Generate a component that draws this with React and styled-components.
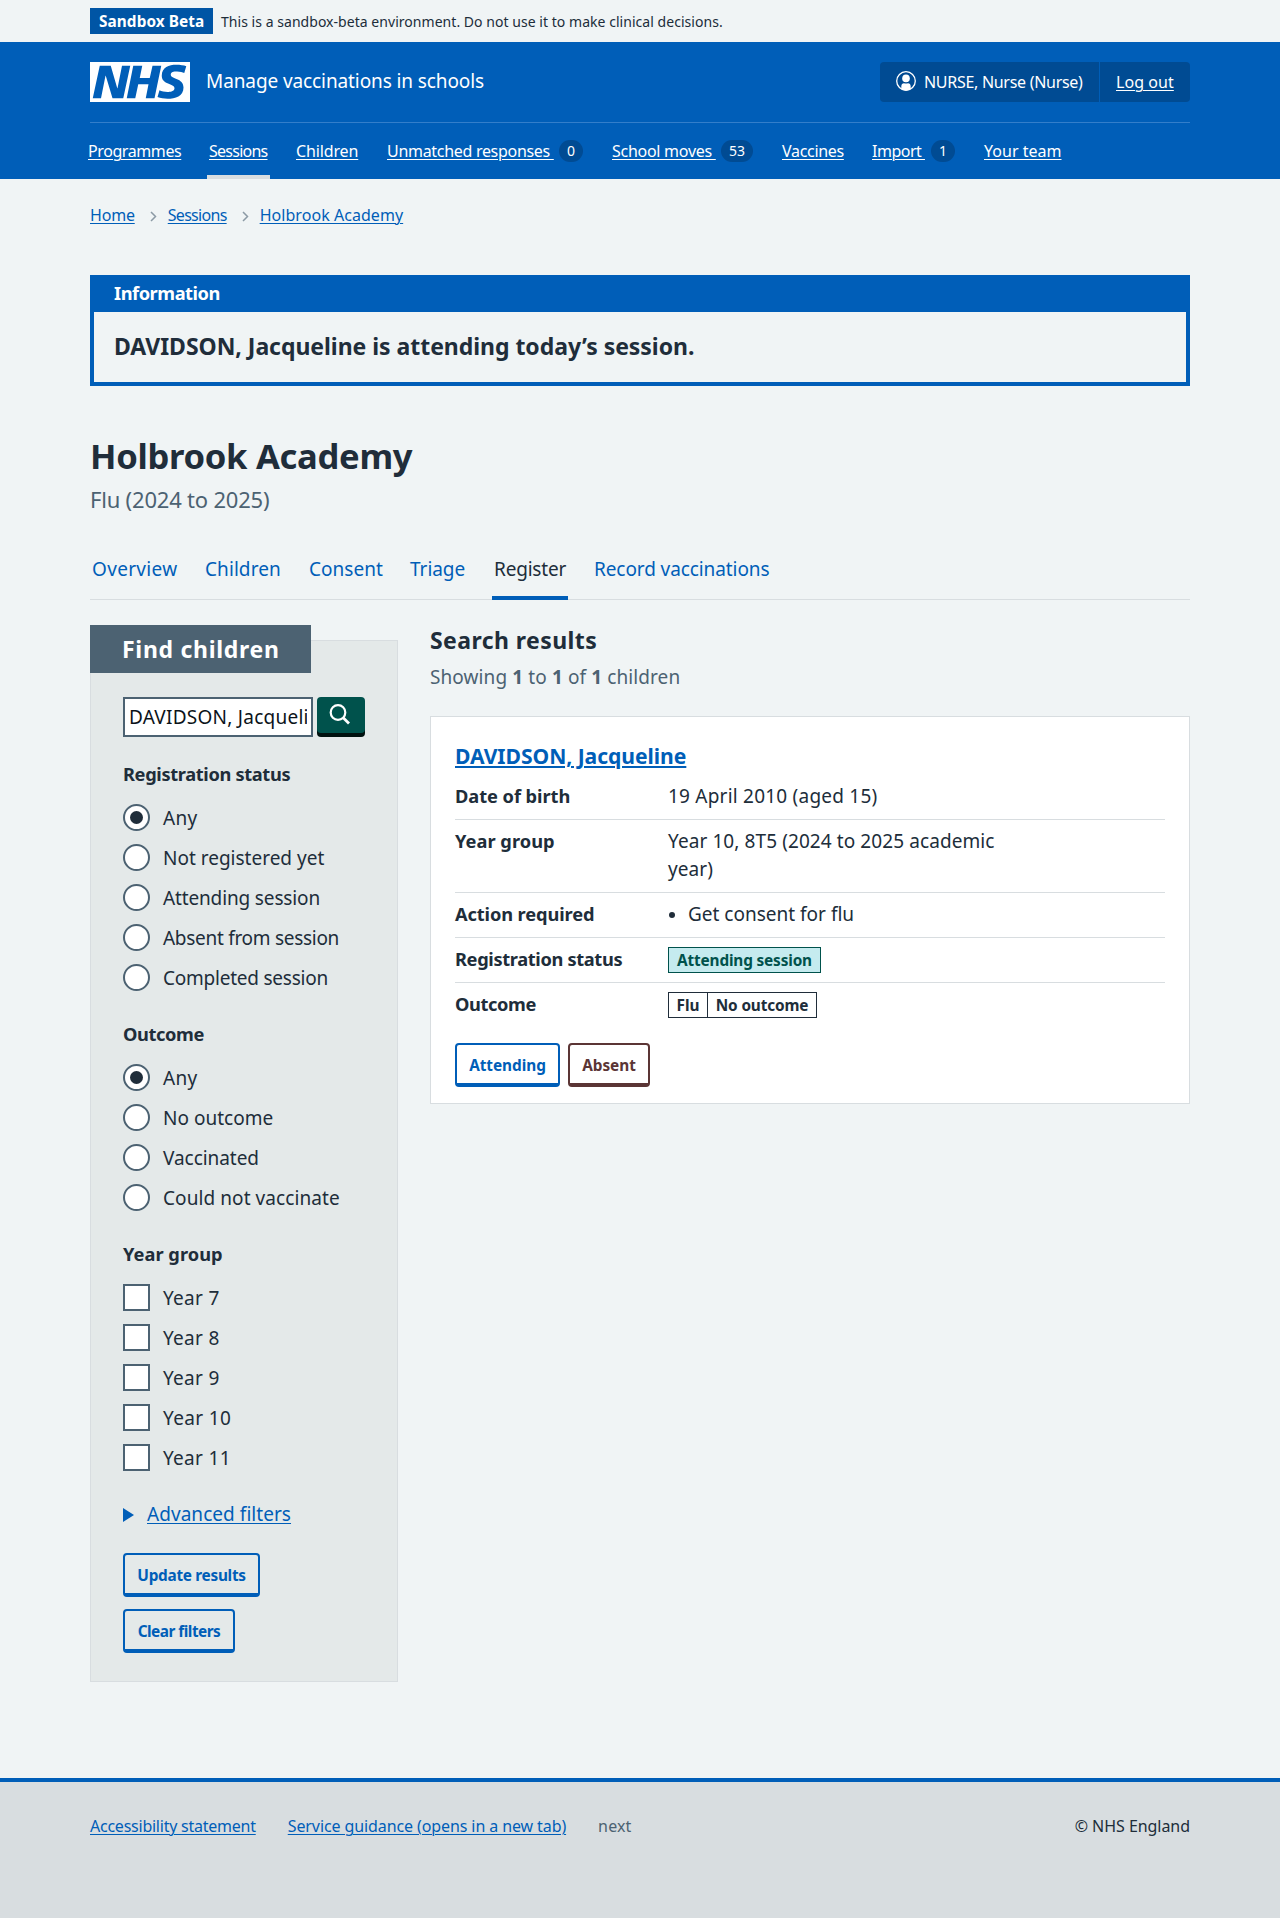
import React from "react";
import styled, { createGlobalStyle } from "styled-components";

const Global = createGlobalStyle`
  *, *::before, *::after { box-sizing: border-box; }
  body {
    margin: 0;
    background: #f0f4f5;
    color: #202d3a;
    font-family: "Noto Sans", "Open Sans", sans-serif;
    font-size: 19px;
    line-height: 28px;
  }
  a {
    color: #005eb8;
    text-decoration: underline;
    text-decoration-thickness: 1px;
    text-underline-offset: 2px;
  }
  h1, h2, h3, p, ul, dl, dd, fieldset, legend { margin: 0; padding: 0; border: 0; }
`;

const spacing = ({ $ls = 0 }) => `letter-spacing: ${$ls}px; white-space: nowrap;`;
const Text = styled.span`${spacing}`;
const Container = styled.div`
  width: 1100px;
  margin: 0 auto;
`;

/* Environment banner */
const Environment = styled(Container)`
  display: flex;
  align-items: center;
  gap: 8px;
  height: 42px;
`;
const EnvironmentTag = styled.strong`
  width: 123px;
  padding: 2px 0 0 9px;
  background: #0055a5;
  color: #fff;
  font-size: 15.36px;
  line-height: 24px;
  ${spacing}
`;
const EnvironmentText = styled.span`
  padding-top: 1px;
  font-size: 14px;
  ${spacing}
`;

/* Header */
const Header = styled.header`
  height: 137px;
  background: #005eb8;
  color: #fff;
  a { color: #fff; }
`;
const HeaderTop = styled.div`
  display: flex;
  align-items: center;
  height: 81px;
  border-bottom: 1px solid #337eca;
`;
const ServiceName = styled.span`
  flex: 1;
  margin-left: 16px;
  padding-bottom: 2px;
  line-height: 36px;
  ${spacing}
`;
const Account = styled.div`
  display: flex;
  gap: 1px;
  width: 310px;
  height: 40px;
  border-radius: 4px;
  overflow: hidden;
  font-size: 16px;
  line-height: 40px;
`;
const AccountItem = styled.div`
  display: flex;
  align-items: center;
  gap: 8px;
  width: ${({ $w }) => $w}px;
  padding-left: 16px;
  background: #004b93;
  svg { margin-bottom: 2px; }
`;
const Nav = styled.nav`
  display: flex;
  gap: 24px;
  margin-left: -4px;
  font-size: 16px;
  line-height: 56px;
`;
const NavItem = styled.div`
  display: flex;
  align-items: center;
  width: ${({ $w }) => $w}px;
  height: 56px;
  padding: 0 2px;
  ${({ $current }) => $current && "box-shadow: inset 0 -4px #d8dde0;"}
  a { white-space: pre; }
`;
const Count = styled.span`
  min-width: ${({ $w }) => $w}px;
  margin: 0 1px 0 auto;
  border-radius: 11px;
  background: #004b93;
  font-size: 14px;
  line-height: 22px;
  text-align: center;
`;

const Breadcrumb = styled.nav`
  display: flex;
  align-items: center;
  height: 24px;
  margin: 24px 0 48px;
  font-size: 16px;
  line-height: 24px;
  svg { margin: 2px 11px 0 15px; }
`;

/* Information banner */
const Banner = styled.section`
  height: 111px;
  margin-bottom: 46px;
  border: 4px solid #005eb8;
`;
const BannerTitle = styled.h2`
  height: 33px;
  padding-left: 20px;
  background: #005eb8;
  color: #fff;
  font-size: 18.24px;
  line-height: 28px;
  ${spacing}
`;
const BannerBody = styled.h3`
  padding: 17px 20px;
  font-size: 23px;
  line-height: 35px;
  ${spacing}
`;

const PageTitle = styled.h1`
  font-size: 34.6px;
  line-height: 48px;
  ${spacing}
`;
const Caption = styled.p`
  margin: 3px 0 25px;
  color: #4c6272;
  font-size: 22px;
  line-height: 32px;
  ${spacing}
`;

const Tabs = styled.nav`
  display: flex;
  gap: 24px;
  height: 60px;
  border-bottom: 1px solid #d8dde0;
`;
const Tab = styled.a`
  width: ${({ $w }) => $w}px;
  height: 60px;
  padding: 15px 2px 0;
  text-decoration: none;
  ${spacing}
  && { color: ${({ $current }) => ($current ? "#202d3a" : "#005eb8")}; }
  ${({ $current }) => $current && "box-shadow: inset 0 -4px #005eb8;"}
`;

const Columns = styled.main`
  display: grid;
  grid-template-columns: 308px 760px;
  column-gap: 32px;
  align-items: start;
`;

/* Filters */
const Panel = styled.aside`
  margin-top: 40px;
  padding: 0 32px 28px;
  border: 1px solid #d8dde0;
  background: #e4e9e9;
`;
const PanelTitle = styled.h2`
  width: 221px;
  margin: -16px 0 24px -33px;
  padding-left: 32px;
  background: #4c6272;
  color: #fff;
  font-size: 23px;
  line-height: 48px;
  ${spacing}
`;
const SearchRow = styled.div`
  display: flex;
  gap: 4px;
`;
const SearchInput = styled.input`
  width: 190px;
  height: 40px;
  padding: 0 4px 1px 4px;
  border: 2px solid #4c6272;
  border-radius: 0;
  background: #fff;
  color: #0b1319;
  font: inherit;
  letter-spacing: 0.25px;
`;
const SearchButton = styled.button`
  display: flex;
  justify-content: center;
  width: 48px;
  height: 36px;
  padding: 7px 2px 0 0;
  border: 0;
  border-radius: 4px;
  background: #00524c;
  box-shadow: 0 4px #00110f;
`;
const Group = styled.fieldset`
  min-width: 0;
  margin-top: 23px;
`;
const Legend = styled.legend`
  display: block;
  margin-bottom: 9px;
  font-size: 18.24px;
  font-weight: 700;
  ${spacing}
`;
const Option = styled.label`
  display: flex;
  align-items: center;
  gap: 13px;
  height: 40px;
  ${spacing}
  span { padding-top: 2px; }
`;
const Radio = styled.i`
  display: grid;
  place-items: center;
  width: 27px;
  height: 27px;
  border: 2px solid #4c6272;
  border-radius: 50%;
  background: #fff;
  &::after {
    content: "";
    width: 13px;
    height: 13px;
    border-radius: 50%;
    background: ${({ $on }) => ($on ? "#202d3a" : "transparent")};
  }
`;
const Checkbox = styled.i`
  width: 27px;
  height: 27px;
  border: 2px solid #4c6272;
  background: #fff;
`;
const Advanced = styled.div`
  display: flex;
  align-items: center;
  margin: 23px 0 25px;
  svg { margin: 2px 13px 0 0; }
`;
const Stack = styled.div`
  display: flex;
  flex-direction: column;
  gap: 12px;
`;
const tones = { blue: "#005eb8", red: "#5b3535" };
const Button = styled.button`
  width: ${({ $w }) => $w}px;
  height: 44px;
  padding: 4px 0 0;
  border: 2px solid ${({ $tone = "blue" }) => tones[$tone]};
  border-bottom-width: 4px;
  border-radius: 4px;
  background: transparent;
  color: ${({ $tone = "blue" }) => tones[$tone]};
  font: 700 15.36px/28px "Noto Sans", "Open Sans", sans-serif;
  ${spacing}
`;

/* Results */
const Results = styled.section`margin-top: 22px;`;
const ResultsTitle = styled.h2`
  font-size: 23px;
  line-height: 36px;
  ${spacing}
`;
const ResultsCount = styled.p`
  margin: 5px 0 25px;
  color: #4c6272;
  ${spacing}
`;
const Card = styled.article`
  padding: 23px 24px 16px;
  border: 1px solid #d8dde0;
  background: #fff;
`;
const CardTitle = styled.h3`
  margin-bottom: 10px;
  font-size: 21.1px;
  line-height: 32px;
  ${spacing}
  a { text-decoration-thickness: 2px; }
`;
const Summary = styled.dl`margin-bottom: 25px;`;
const SummaryRow = styled.div`
  display: grid;
  grid-template-columns: 213px 350px;
  padding: 7px 0 9px;
  border-bottom: 1px solid #d8dde0;
  &:first-child { padding-top: 0; }
  &:last-child { padding-bottom: 0; border: 0; }
`;
const Term = styled.dt`
  font-size: 18.24px;
  font-weight: 700;
  ${spacing}
`;
const Value = styled.dd`
  display: flex;
  letter-spacing: ${({ $ls = 0 }) => $ls}px;
`;
const Bullet = styled.i`
  width: 6px;
  height: 6px;
  margin: 12px 13px 0 1px;
  border-radius: 50%;
  background: #202d3a;
`;
const Tag = styled.strong`
  width: ${({ $w }) => $w}px;
  height: 26px;
  margin: 2px 0 0 ${({ $joined }) => ($joined ? -1 : 0)}px;
  border: 1px solid ${({ $teal }) => ($teal ? "#00524c" : "#202d3a")};
  background: ${({ $teal }) => ($teal ? "#c5ebef" : "#fff")};
  color: ${({ $teal }) => ($teal ? "#00524c" : "#202d3a")};
  font-size: 15.36px;
  line-height: 26px;
  text-align: center;
  ${spacing}
`;
const Actions = styled.div`
  display: flex;
  gap: 8px;
`;

/* Footer */
const Footer = styled.footer`
  height: 140px;
  margin-top: 96px;
  padding-top: 32px;
  border-top: 4px solid #005eb8;
  background: #d8dde0;
`;
const FooterRow = styled(Container)`
  display: flex;
  gap: 32px;
  font-size: 16px;
  line-height: 24px;
`;
const FooterNote = styled.span`
  color: #4c6272;
  ${spacing}
`;
const Copyright = styled.span`
  margin-left: auto;
  ${spacing}
`;

const Logo = () => (
  <svg width="100" height="40" viewBox="0 0 40 16" role="img" aria-label="NHS">
    <path fill="#fff" d="M0 0h40v16H0z" />
    <path fill="#005eb8" d="M3.9 1.5h4.4l2.6 9h.1l1.8-9h3.3l-2.8 13H9l-2.7-9h-.1l-1.8 9H1.1M17.3 1.5h3.6l-1 4.9h4L25 1.5h3.5l-2.7 13h-3.5l1.1-5.6h-4.1l-1.2 5.6h-3.4M37.7 4.4c-.7-.3-1.6-.6-2.9-.6-1.4 0-2.5.2-2.5 1.3 0 1.8 5.1 1.2 5.1 5.1 0 3.6-3.3 4.5-6.4 4.5-1.3 0-2.9-.3-4-.7l.8-2.7c.7.4 2.1.7 3.2.7s2.8-.2 2.8-1.5c0-2.1-5.1-1.3-5.1-5 0-3.4 2.9-4.4 5.8-4.4 1.6 0 3.1.2 4 .6" />
  </svg>
);
const UserIcon = () => (
  <svg width="20" height="20" viewBox="0 0 20 20">
    <circle cx="10" cy="10" r="9.3" fill="none" stroke="#fff" strokeWidth="1.3" />
    <circle cx="10" cy="7.4" r="3.8" fill="#fff" />
    <path fill="#fff" d="M5.3 18v-2.5c0-2.2 1.2-3.3 2.7-3.3q2 .8 4 0c1.5 0 2.7 1.1 2.7 3.3V18q-4.7 3-9.4 0z" />
  </svg>
);
const SearchIcon = () => (
  <svg width="22" height="22" viewBox="0 0 22 22" fill="none" stroke="#fff">
    <circle cx="9" cy="8.5" r="7.3" strokeWidth="2.2" />
    <path d="M14.2 13.7 20 19.4" strokeWidth="2.8" />
  </svg>
);
const Chevron = () => (
  <svg width="7" height="11" viewBox="0 0 7 11" fill="none" stroke="#8c9aa5" strokeWidth="1.5">
    <path d="M1 1l4.5 4.5L1 10" />
  </svg>
);
const Triangle = () => (
  <svg width="11" height="14" viewBox="0 0 11 14"><path fill="#005eb8" d="M0 0l11 7-11 7z" /></svg>
);

const nav = [
  { text: "Programmes", w: 97, ls: -0.41 },
  { text: "Sessions", w: 63, ls: -0.75, current: true },
  { text: "Children", w: 67, ls: -0.13 },
  { text: "Unmatched responses ", w: 201, ls: -0.3, count: 0 },
  { text: "School moves ", w: 146, ls: -0.27, count: 53, cw: 32 },
  { text: "Vaccines", w: 66, ls: -0.31 },
  { text: "Import ", w: 88, ls: -0.5, count: 1 },
  { text: "Your team", w: 81, ls: 0.02 },
];
const tabs = [
  { text: "Overview", w: 89, ls: 0.33 },
  { text: "Children", w: 80, ls: 0.08 },
  { text: "Consent", w: 77, ls: 0.03 },
  { text: "Triage", w: 60, ls: -0.04 },
  { text: "Register", w: 76, ls: -0.19, current: true },
  { text: "Record vaccinations", w: 182, ls: -0.09 },
];
const groups = [
  {
    title: "Registration status", ls: -0.35, control: Radio,
    options: [["Any", 0.3, true], ["Not registered yet", 0], ["Attending session", -0.14], ["Absent from session", -0.29], ["Completed session", -0.23]],
  },
  {
    title: "Outcome", ls: -0.38, control: Radio,
    options: [["Any", 0.3, true], ["No outcome", 0.02], ["Vaccinated", -0.05], ["Could not vaccinate", 0.08]],
  },
  {
    title: "Year group", ls: 0.03, control: Checkbox,
    options: [["Year 7", 0.3], ["Year 8", 0.3], ["Year 9", 0.3], ["Year 10", 0.36], ["Year 11", 0.3]],
  },
];

export default function App() {
  return (
    <>
      <Global />
      <Environment>
        <EnvironmentTag $ls={0.07}>Sandbox Beta</EnvironmentTag>
        <EnvironmentText $ls={0.04}>This is a sandbox-beta environment. Do not use it to make clinical decisions.</EnvironmentText>
      </Environment>
      <Header>
        <Container>
          <HeaderTop>
            <Logo />
            <ServiceName $ls={-0.1}>Manage vaccinations in schools</ServiceName>
            <Account>
              <AccountItem $w={219}><UserIcon /><Text $ls={-0.29}>NURSE, Nurse (Nurse)</Text></AccountItem>
              <AccountItem $w={90}><Text as="a" href="#" $ls={0.06}>Log out</Text></AccountItem>
            </Account>
          </HeaderTop>
          <Nav>
            {nav.map((n) => (
              <NavItem key={n.text} $w={n.w} $current={n.current}>
                <Text as="a" href="#" $ls={n.ls}>{n.text}</Text>
                {n.count !== undefined && <Count $w={n.cw || 24}>{n.count}</Count>}
              </NavItem>
            ))}
          </Nav>
        </Container>
      </Header>
      <Container>
        <Breadcrumb>
          <Text as="a" href="#" $ls={-0.2}>Home</Text><Chevron />
          <Text as="a" href="#" $ls={-0.7}>Sessions</Text><Chevron />
          <Text as="a" href="#" $ls={0.05}>Holbrook Academy</Text>
        </Breadcrumb>
        <Banner>
          <BannerTitle $ls={-0.45}>Information</BannerTitle>
          <BannerBody $ls={-0.04}>DAVIDSON, Jacqueline is attending today’s session.</BannerBody>
        </Banner>
        <PageTitle $ls={-0.3}>Holbrook Academy</PageTitle>
        <Caption $ls={-0.2}>Flu (2024 to 2025)</Caption>
        <Tabs>
          {tabs.map((t) => (
            <Tab key={t.text} href="#" $w={t.w} $ls={t.ls} $current={t.current}>{t.text}</Tab>
          ))}
        </Tabs>
        <Columns>
          <Panel>
            <PanelTitle $ls={0.7}>Find children</PanelTitle>
            <SearchRow>
              <SearchInput defaultValue="DAVIDSON, Jacqueline" />
              <SearchButton aria-label="Search"><SearchIcon /></SearchButton>
            </SearchRow>
            {groups.map(({ title, ls, control: Control, options }) => (
              <Group key={title}>
                <Legend $ls={ls}>{title}</Legend>
                {options.map(([text, optionLs, on]) => (
                  <Option key={text} $ls={optionLs}><Control $on={on} /><span>{text}</span></Option>
                ))}
              </Group>
            ))}
            <Advanced><Triangle /><Text as="a" href="#" $ls={0.05}>Advanced filters</Text></Advanced>
            <Stack>
              <Button $w={137} $ls={-0.29}>Update results</Button>
              <Button $w={112} $ls={-0.5}>Clear filters</Button>
            </Stack>
          </Panel>
          <Results>
            <ResultsTitle $ls={0.43}>Search results</ResultsTitle>
            <ResultsCount $ls={0.1}>Showing <b>1</b> to <b>1</b> of <b>1</b> children</ResultsCount>
            <Card>
              <CardTitle $ls={-0.04}><a href="#">DAVIDSON, Jacqueline</a></CardTitle>
              <Summary>
                <SummaryRow><Term $ls={-0.05}>Date of birth</Term><Value $ls={0.22}>19 April 2010 (aged 15)</Value></SummaryRow>
                <SummaryRow><Term $ls={0.03}>Year group</Term><Value $ls={0.09}>Year 10, 8T5 (2024 to 2025 academic year)</Value></SummaryRow>
                <SummaryRow><Term $ls={-0.11}>Action required</Term><Value $ls={0}><Bullet />Get consent for flu</Value></SummaryRow>
                <SummaryRow><Term $ls={-0.35}>Registration status</Term><Value><Tag $w={153} $teal $ls={-0.16}>Attending session</Tag></Value></SummaryRow>
                <SummaryRow>
                  <Term $ls={-0.38}>Outcome</Term>
                  <Value><Tag $w={40}>Flu</Tag><Tag $w={110} $joined $ls={-0.15}>No outcome</Tag></Value>
                </SummaryRow>
              </Summary>
              <Actions>
                <Button $w={105} $ls={-0.05}>Attending</Button>
                <Button $w={82} $tone="red" $ls={-0.04}>Absent</Button>
              </Actions>
            </Card>
          </Results>
        </Columns>
      </Container>
      <Footer>
        <FooterRow>
          <Text as="a" href="#" $ls={-0.24}>Accessibility statement</Text>
          <Text as="a" href="#" $ls={-0.1}>Service guidance (opens in a new tab)</Text>
          <FooterNote $ls={0.15}>next</FooterNote>
          <Copyright $ls={-0.05}>© NHS England</Copyright>
        </FooterRow>
      </Footer>
    </>
  );
}
